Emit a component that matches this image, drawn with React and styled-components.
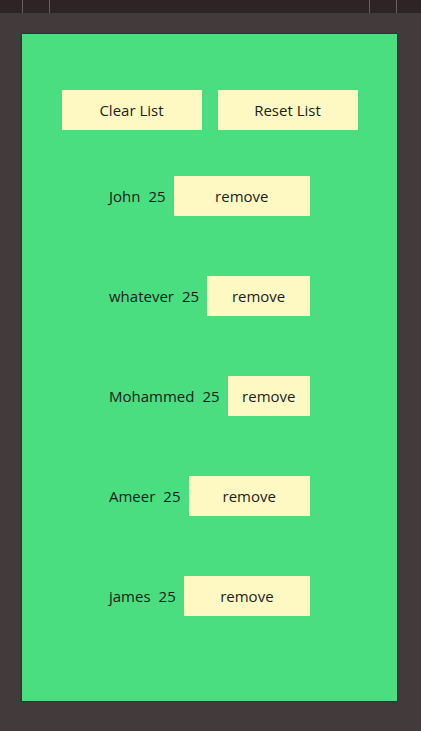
import React, { useState } from 'react';
import styled, { createGlobalStyle } from 'styled-components';

const initialPeople = [
	{ name: 'John', age: 25 },
	{ name: 'whatever', age: 25 },
	{ name: 'Mohammed', age: 25 },
	{ name: 'Ameer', age: 25 },
	{ name: 'james', age: 25 },
];

//Global styles
const GlobalStyle = createGlobalStyle`
	html, body {
		margin: 0;
		padding: 0;
		background: #433a3b;
	}
	body {
		font-family: "Open Sans", "Noto Sans", sans-serif;
		font-size: 15px;
		color: #1c1c1c;
	}
	* {
		box-sizing: border-box;
	}
`;

//Styled components
const Page = styled.div`
	min-height: 731px;
	display: flex;
	flex-direction: column;
`;

const TopBar = styled.div`
	height: 13px;
	background: #2e2325;
	display: flex;
	justify-content: space-between;
	padding: 0 24px 0 22px;
`;

const Tabs = styled.div`
	display: flex;
	gap: 26px;
`;

const Divider = styled.span`
	width: 1px;
	height: 100%;
	background: #6b6163;
`;

const Panel = styled.main`
	margin: 21px 24px 0 22px;
	height: 667px;
	background: #4ade80;
	box-shadow: 0 0 2px rgba(0, 0, 0, 0.6);
	padding-top: 56px;
	display: flex;
	flex-direction: column;
	align-items: center;
`;

const Actions = styled.div`
	display: flex;
	gap: 16px;
	margin-bottom: 46px;
`;

const Button = styled.button`
	border: 0;
	background: #fef9c3;
	height: 40px;
	width: ${props => props.wide ? '140px' : 'auto'};
	flex: ${props => props.grow ? '1' : 'none'};
	font: inherit;
	color: #1c1c1c;
	cursor: pointer;
	padding: 0;
`;

const List = styled.ul`
	list-style: none;
	margin: 0;
	padding: 0;
	display: flex;
	flex-direction: column;
	gap: 60px;
`;

const Row = styled.li`
	width: 201px;
	display: flex;
	align-items: center;
	gap: 8px;
`;

const Label = styled.span`
	white-space: nowrap;
`;

export default function App() {
	const [people, setPeople] = useState(initialPeople);

	const removePerson = index => {
		setPeople(people.filter((p, i) => i !== index));
	};

	return (
		<Page>
			<GlobalStyle />
			<TopBar>
				<Tabs><Divider /><Divider /></Tabs>
				<Tabs><Divider /><Divider /></Tabs>
			</TopBar>
			<Panel>
				<Actions>
					<Button wide onClick={() => setPeople([])}>Clear List</Button>
					<Button wide onClick={() => setPeople(initialPeople)}>Reset List</Button>
				</Actions>
				<List>
					{people.map((person, index) => (
						<Row key={index}>
							<Label>{person.name}</Label>
							<Label>{person.age}</Label>
							<Button grow onClick={() => removePerson(index)}>remove</Button>
						</Row>
					))}
				</List>
			</Panel>
		</Page>
	);
}
